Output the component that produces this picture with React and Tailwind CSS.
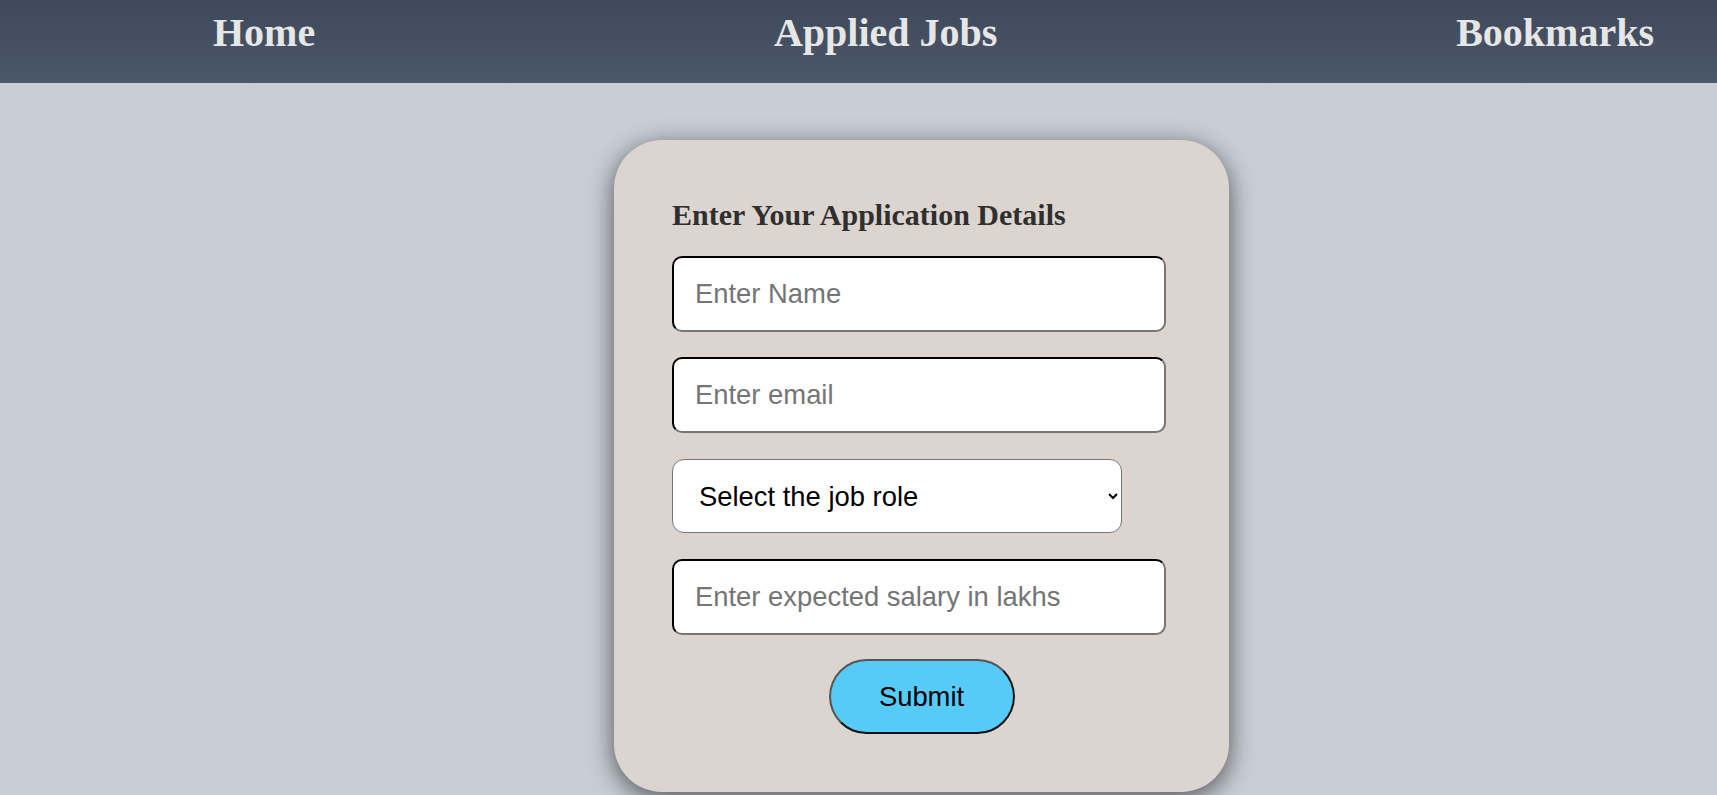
import { useState } from 'react';

const navLinks = ["Home", "Applied Jobs", "Bookmarks"];
const roles = ["Frontend Developer", "Backend Developer", "Full Stack Developer", "UI/UX Designer"];

function NavBar() {
  return (
    <nav className="h-[83px] flex justify-between items-start pt-[10px] pl-[213px] pr-[63px] bg-gradient-to-b from-[#3e495b] to-[#4b5869]">
      {navLinks.map(link => (
        <a
          key={link}
          href="#"
          className="text-[40px] leading-[46px] font-bold text-[#e6e6e6] font-['Liberation_Serif','Times_New_Roman',serif]"
        >
          {link}
        </a>
      ))}
    </nav>
  );
}

export default function App() {
  const [form, setForm] = useState({ name: '', email: '', role: '', salary: '' });

  const update = (key) => (e) => setForm({ ...form, [key]: e.target.value });

  const inputClass =
    "w-[494px] h-[76px] shrink-0 rounded-[10px] border-2 [border-style:inset] border-t-[#1f1f1f] border-l-[#1f1f1f] border-b-[#767676] border-r-[#767676] bg-white pl-[21px] text-[27.4px] text-black placeholder:text-[#757575] outline-none font-['Liberation_Sans',Arial,sans-serif]";

  return (
    <div className="min-h-[795px] bg-[#c9ced6]">
      <NavBar />
      <div className="flex justify-center pt-[57px] pl-[126px]">
        <form
          onSubmit={e => e.preventDefault()}
          className="w-[615px] h-[652px] rounded-[48px] bg-[#dcd5cf] shadow-[0_6px_26px_rgba(0,0,0,0.6)] px-[58px] pt-[58px] flex flex-col gap-[25px]"
        >
          <h3 className="text-[30px] leading-[33px] font-bold text-[#2f2f2f] font-['Liberation_Serif','Times_New_Roman',serif]">
            Enter Your Application Details
          </h3>
          <input className={inputClass} placeholder="Enter Name" value={form.name} onChange={update('name')} />
          <input className={inputClass + " h-[75px]"} placeholder="Enter email" value={form.email} onChange={update('email')} />
          <select
            value={form.role}
            onChange={update('role')}
            className="w-[450px] h-[74px] mt-[1px] shrink-0 rounded-[12px] border border-[#767676] bg-white pl-[22px] pr-[4px] text-[27.4px] text-black outline-none font-['Liberation_Sans',Arial,sans-serif]"
          >
            <option value="">Select the job role</option>
            {roles.map(r => (
              <option key={r} value={r}>{r}</option>
            ))}
          </select>
          <input className={inputClass + " h-[75px] mt-[1px]"} placeholder="Enter expected salary in lakhs" value={form.salary} onChange={update('salary')} />
          <button
            type="submit"
            className="self-center w-[186px] h-[75px] mt-[-1px] shrink-0 rounded-full border-2 border-t-[#555] border-l-[#555] border-b-[#111] border-r-[#111] bg-[#56cbf9] text-[27.4px] text-black font-['Liberation_Sans',Arial,sans-serif]"
          >
            Submit
          </button>
        </form>
      </div>
    </div>
  );
}
